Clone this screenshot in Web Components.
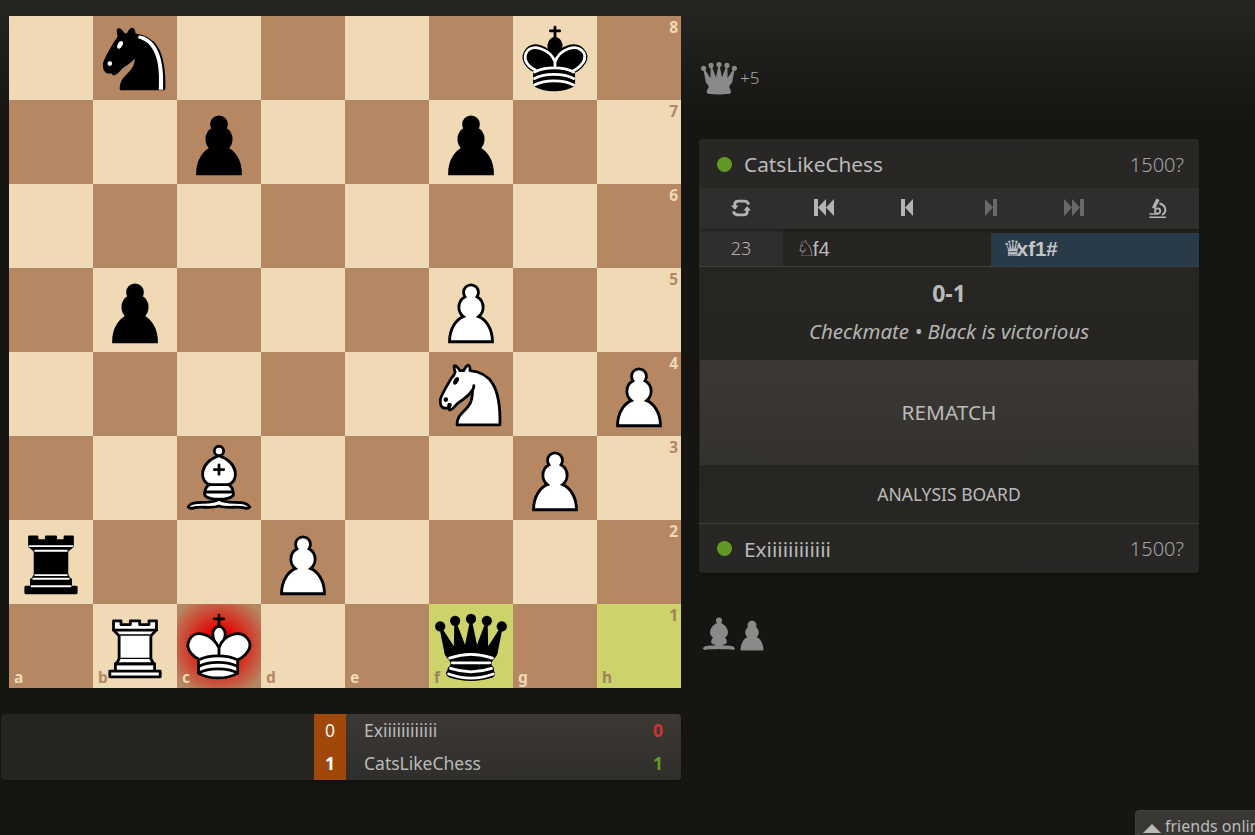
<!DOCTYPE html>
<html lang="en"><head><meta charset="utf-8"><title>Chess game</title>
<style>
html,body{margin:0;height:100%;overflow:hidden}
body{background:#161512 linear-gradient(to bottom,#272521,#161512 116px) no-repeat;color:#bababa;font-family:"Noto Sans",sans-serif}
</style></head><body>
<game-page>
  <chess-board slot="board"></chess-board>
  <cross-table slot="table"></cross-table>
  <mono-row slot="top" pieces="q" diff="+5"></mono-row>
  <game-panel slot="panel">
    <player-row name="CatsLikeChess" rating="1500?"></player-row>
    <control-bar></control-bar>
    <move-row num="23"></move-row>
    <game-result></game-result>
    <action-buttons></action-buttons>
    <player-row name="Exiiiiiiiiiiii" rating="1500?" bordered></player-row>
  </game-panel>
  <mono-row slot="bottom" pieces="b p"></mono-row>
</game-page>
<friends-box></friends-box>
<script>
const W='stroke="#000" stroke-width="1.5" stroke-linecap="round" stroke-linejoin="round" fill-rule="evenodd"';
const PAWN='M22.5 9c-2.21 0-4 1.79-4 4 0 .89.29 1.71.78 2.38C17.33 16.5 16 18.59 16 21c0 2.03.94 3.84 2.41 5.03-3 1.06-7.41 5.55-7.41 13.47h23c0-7.92-4.41-12.41-7.41-13.47 1.47-1.19 2.41-3 2.41-5.03 0-2.41-1.33-4.5-3.28-5.62.49-.67.78-1.49.78-2.38 0-2.21-1.79-4-4-4z';
const KN1='M22 10c10.5 1 16.5 8 16 29H15c0-9 10-6.5 8-21';
const KN2='M24 18c.38 2.91-5.55 7.37-8 9-3 2-2.82 4.34-5 4-1.042-.94 1.41-3.04 0-3-1 0 .19 1.23-1 2-1 0-4.003 1-4-4 0-2 6-12 6-12s1.89-1.9 2-3.5c-.73-.994-.5-2-.5-3 1-1 3 2.5 3 2.5h2s.78-1.992 2.5-3c1 0 1 3 1 3';
const KN3='M9.5 25.5a.5.5 0 1 1-1 0 .5.5 0 1 1 1 0zm5.433-9.75a.5 1.5 30 1 1-.866-.5.5 1.5 30 1 1 .866.5z';
const KING='M11.5 37c5.5 3.5 15.5 3.5 21 0v-7s9-4.5 6-10.5c-4-6.5-13.5-3.5-16 4V27v-3.5c-3.5-7.5-13-10.5-16-4-3 6 5 10 5 10V37z';
const KHEAD='M22.5 25s4.5-7.5 3-10.5c0 0-1-2.5-3-2.5s-3 2.5-3 2.5c-1.5 3 3 10.5 3 10.5';
const KBAND='M11.5 30c5.5-3 15.5-3 21 0m-21 3.5c5.5-3 15.5-3 21 0m-21 3.5c5.5-3 15.5-3 21 0';
const BISH1='M9 36c3.39-.97 10.11.43 13.5-2 3.39 2.43 10.11 1.03 13.5 2 0 0 1.65.54 3 2-.68.97-1.65.99-3 .5-3.39-.97-10.11.46-13.5-1-3.39 1.46-10.11.03-13.5 1-1.354.49-2.323.47-3-.5 1.354-1.94 3-2 3-2z';
const BISH2='M15 32c2.5 2.5 12.5 2.5 15 0 .5-1.5 0-2 0-2 0-2.5-2.5-4-2.5-4 5.5-1.5 6-11.5-5-15.5-11 4-10.5 14-5 15.5 0 0-2.5 1.5-2.5 4 0 0-.5.5 0 2z';
const BISH3='M25 8a2.5 2.5 0 1 1-5 0 2.5 2.5 0 1 1 5 0z';
const QCIR='<circle cx="6" cy="12" r="2.75"/><circle cx="14" cy="9" r="2.75"/><circle cx="22.5" cy="8" r="2.75"/><circle cx="31" cy="9" r="2.75"/><circle cx="39" cy="12" r="2.75"/>';
const Q1='M9 26c8.5-1.5 21-1.5 27 0l2.5-12.5L31 25l-.3-14.1-5.2 13.6-3-14.5-3 14.5-5.2-13.6L14 25 6.5 13.5 9 26z';
const Q2='M9 26c0 2 1.5 2 2.5 4 1 1.5 1 1 .5 3.5-1.5 1-1.5 2.5-1.5 2.5-1.5 1.5.5 2.5.5 2.5 6.5 1 16.5 1 23 0 0 0 1.5-1 0-2.5 0 0 .5-1.5-1-2.5-.5-2.5-.5-2 .5-3.5 1-2 2.5-2 2.5-4-8.5-1.5-18.5-1.5-27 0z';
const Q3='M11 29a35 35 1 0 1 23 0M12.5 31.5h20M11.5 34.5a35 35 1 0 0 22 0M10.5 37.5a35 35 1 0 0 24 0';
const PIECES={
P:`<path d="${PAWN}" fill="#fff" stroke="#000" stroke-width="1.5" stroke-linecap="round"/>`,
p:`<path d="${PAWN}" fill="#000" stroke="#000" stroke-width="1.5" stroke-linecap="round"/>`,
R:`<g fill="#fff" ${W}><path d="M9 39h27v-3H9v3zM12 36v-4h21v4H12zM11 14V9h4v2h5V9h5v2h5V9h4v5" stroke-linecap="butt"/><path d="M34 14l-3 3H14l-3-3"/><path d="M31 17v12.5H14V17" stroke-linecap="butt" stroke-linejoin="miter"/><path d="M31 29.5l1.5 2.5h-20l1.5-2.5"/><path d="M11 14h23" fill="none" stroke-linejoin="miter"/></g>`,
r:`<g ${W}><path d="M9 39h27v-3H9v3zM12.5 32l1.5-2.5h17l1.5 2.5h-20zM12 36v-4h21v4H12z" stroke-linecap="butt"/><path d="M14 29.5v-13h17v13H14z" stroke-linecap="butt" stroke-linejoin="miter"/><path d="M14 16.5L11 14h23l-3 2.5H14zM11 14V9h4v2h5V9h5v2h5V9h4v5H11z" stroke-linecap="butt"/><path d="M12 35.5h21M13 31.5h19M14 29.5h17M14 16.5h17M11 14h23" fill="none" stroke="#fff" stroke-width="1" stroke-linejoin="miter"/></g>`,
N:`<g fill="none" ${W}><path d="${KN1}" fill="#fff"/><path d="${KN2}" fill="#fff"/><path d="${KN3}" fill="#000"/></g>`,
n:`<g fill="none" ${W}><path d="${KN1}" fill="#000"/><path d="${KN2}" fill="#000"/><path d="${KN3}" fill="#fff" stroke="#fff"/><path d="M24.55 10.4l-.45 1.45.5.15c3.15 1 5.65 2.49 7.9 6.75S35.75 29.06 35.25 39l-.05.5h2.25l.05-.5c.5-10.06-.88-16.85-3.25-21.34-2.37-4.49-5.79-6.64-9.19-7.16l-.51-.1z" fill="#fff" stroke="none"/></g>`,
B:`<g fill="none" ${W}><g fill="#fff" stroke-linecap="butt"><path d="${BISH1}"/><path d="${BISH2}"/><path d="${BISH3}"/></g><path d="M17.5 26h10M15 30h15m-7.5-14.5v5M20 18h5" stroke-linejoin="miter"/></g>`,
K:`<g fill="none" ${W}><path d="M22.5 11.63V6M20 8h5" stroke-linejoin="miter"/><path d="${KHEAD}" fill="#fff" stroke-linecap="butt" stroke-linejoin="miter"/><path d="${KING}" fill="#fff"/><path d="${KBAND}"/></g>`,
k:`<g fill="none" ${W}><path d="M22.5 11.63V6" stroke-linejoin="miter"/><path d="${KHEAD}" fill="#000" stroke-linecap="butt" stroke-linejoin="miter"/><path d="${KING}" fill="#000"/><path d="M20 8h5" stroke-linejoin="miter"/><path d="M32 29.5s8.5-4 6.03-9.65C34.15 14 25 18 22.5 24.5l.01 2.1-.01-2.1C20 18 9.906 14 6.997 19.85c-2.497 5.65 4.853 9 4.853 9" stroke="#fff"/><path d="${KBAND}" stroke="#fff"/></g>`,
q:`<g ${W}><g stroke="none">${QCIR}</g><path d="${Q1}" stroke-linecap="butt"/><path d="${Q2}" stroke-linecap="butt"/><path d="M11 38.5a35 35 1 0 0 23 0" fill="none" stroke-linecap="butt"/><path d="${Q3}" fill="none" stroke="#fff"/></g>`
};
const MONO={
q:`<g fill="#8a8a8a" stroke="#8a8a8a" stroke-width="1.5" stroke-linejoin="round"><g stroke="none">${QCIR}</g><path d="${Q1}"/><path d="${Q2}"/></g>`,
b:`<g fill="#8a8a8a" stroke="#8a8a8a" stroke-width="1.5" stroke-linejoin="round"><path d="${BISH1}"/><path d="${BISH2}"/><path d="${BISH3}"/></g>`,
p:`<path d="${PAWN}" fill="#8a8a8a" stroke="#8a8a8a" stroke-width="1.5"/>`
};
function def(name,css,html){
  customElements.define(name,class extends HTMLElement{
    constructor(){super();this.attachShadow({mode:'open'})}
    connectedCallback(){
      const h=typeof html==='function'?html(this):html;
      this.shadowRoot.innerHTML=`<style>${css}</style>${h}`;
    }
  });
}
def('chess-piece',':host{display:block;width:100%;height:100%}svg{display:block;width:100%;height:100%}',
  e=>`<svg viewBox="0 0 45 45" aria-hidden="true">${PIECES[e.getAttribute('type')]}</svg>`);
def('board-square',`:host{display:block;position:relative;width:84px;height:84px;background:var(--bg)}
  :host([tone=light]){--bg:#f0d9b5;--co:#b58863}
  :host([tone=dark]){--bg:#b58863;--co:#f0d9b5}
  :host([last]){--bg:#cdd26a}
  :host([last][tone=light]){--co:#a3815f}
  .chk{position:absolute;inset:0;background:radial-gradient(ellipse at center,#f00 0%,#e70000 25%,rgba(169,0,0,0) 89%,rgba(158,0,0,0) 100%)}
  .co{position:absolute;font:700 15.5px/1 "Noto Sans",sans-serif;color:var(--co)}
  .f{left:5px;bottom:3px}.r{right:3px;top:4px}
  chess-piece{position:absolute;inset:0}`,
  e=>{
    const p=e.getAttribute('piece'),f=e.getAttribute('file'),r=e.getAttribute('rank');
    return `${e.hasAttribute('check')?'<div class="chk"></div>':''}${f?`<span class="co f">${f}</span>`:''}${r?`<span class="co r">${r}</span>`:''}${p?`<chess-piece type="${p}"></chess-piece>`:''}`;
  });
const POS={b8:'n',g8:'k',c7:'p',f7:'p',b5:'p',f5:'P',f4:'N',h4:'P',c3:'B',g3:'P',a2:'r',d2:'P',b1:'R',c1:'K',f1:'q'};
def('chess-board',':host{display:grid;grid-template-columns:repeat(8,84px);grid-auto-rows:84px;width:672px;height:672px}',
  ()=>{
    let s='';
    for(let r=8;r>=1;r--)for(let c=0;c<8;c++){
      const fl='abcdefgh'[c],id=fl+r,tone=(c+r)%2===0?'light':'dark';
      s+=`<board-square tone="${tone}"${POS[id]?` piece="${POS[id]}"`:''}${r===1?` file="${fl}"`:''}${c===7?` rank="${r}"`:''}${id==='f1'||id==='h1'?' last':''}${id==='c1'?' check':''}></board-square>`;
    }
    return s;
  });
def('mono-row',`:host{display:flex;align-items:center;height:42px;margin-left:-1px}
  svg{width:42px;height:42px;display:block;flex:none}svg+svg{margin-left:-9px}
  span{font-size:17px;font-weight:300;color:#a6a6a6;padding-bottom:2px}`,
  e=>e.getAttribute('pieces').split(' ').map(k=>`<svg viewBox="0 0 45 45" aria-hidden="true">${MONO[k]}</svg>`).join('')+(e.getAttribute('diff')?`<span>${e.getAttribute('diff')}</span>`:''));
def('player-row',`:host{display:flex;align-items:center;height:49px;padding:1px 15px 0 18px;box-sizing:border-box;font-size:20.8px;color:#bababa}
  :host([bordered]){border-top:1px solid #404040;height:50px;padding-top:0}
  i{width:15px;height:15px;border-radius:50%;background:#629924;margin-right:12px;flex:none}
  b{font-weight:400;flex:1;white-space:nowrap}
  span{font-weight:300;color:#a2a2a2;font-size:20px}`,
  e=>`<i></i><b>${e.getAttribute('name')}</b><span>${e.getAttribute('rating')}</span>`);
const ICON={
 sync:`<svg width="20" height="20" viewBox="0 0 20 20" fill="none" stroke="currentColor" stroke-width="2.8"><path d="M17.6 6.6Q16.8 3.2 13.2 3.2H7.2Q3.8 3.2 3.8 6.6V8"/><path d="M2.4 13.4Q3.2 16.8 6.8 16.8H12.8Q16.2 16.8 16.2 13.4V12"/><path d="M0 7.6H7.6L3.8 11.8Z M12.4 12.4H20L16.2 8.2Z" fill="currentColor" stroke="none"/></svg>`,
 first:`<svg width="20" height="17" viewBox="0 0 20 17" fill="currentColor"><path d="M0 0h4v17H0zM4 8.5 12 0v17zM12 8.5 20 0v17z"/></svg>`,
 prev:`<svg width="12" height="17" viewBox="0 0 12 17" fill="currentColor"><path d="M0 0h4v17H0zM4 8.5 12 0v17z"/></svg>`,
 next:`<svg width="12" height="17" viewBox="0 0 12 17" fill="currentColor"><path d="M12 0H8v17h4zM8 8.5 0 0v17z"/></svg>`,
 last:`<svg width="20" height="17" viewBox="0 0 20 17" fill="currentColor"><path d="M20 0h-4v17h4zM16 8.5 8 0v17zM8 8.5 0 0v17z"/></svg>`,
 lab:`<svg width="18" height="20" viewBox="0 0 18 20" fill="none" stroke="currentColor" style="margin-left:1px"><path d="M.5 19.2H17" stroke-width="1.6"/><path d="M.5 16H9" stroke-width="1.6"/><path d="M10.5 5.5C17.5 7 18 14.8 13 16.8" stroke-width="1.9"/><path d="M7.4.4 10.6 2 6 11 3 9.5Z" fill="currentColor" stroke="none"/><circle cx="8.6" cy="13" r="2.6" stroke-width="1.7"/></svg>`
};
def('control-bar',`:host{display:grid;grid-template-columns:repeat(6,1fr);height:41px;background:#302e2c;box-shadow:0 2px 3px rgba(0,0,0,.3);position:relative;z-index:1}
  span{display:flex;align-items:center;justify-content:center;color:#b4b4b4;padding-bottom:2px}
  span.off{color:#6a6967}svg{display:block}`,
  ()=>['sync','first','prev','next','last','lab'].map(k=>`<span class="${k==='next'||k==='last'?'off':''}">${ICON[k]}</span>`).join(''));
def('move-row',`:host{display:grid;grid-template-columns:84px 1fr 1fr;height:38px;border-bottom:1px solid #404040;box-sizing:border-box;background:#262421}
  .n{background:#302e2c;display:flex;align-items:center;justify-content:center;font-size:18px;font-weight:300;color:#b0b0b0}
  .m{display:flex;align-items:center;padding:0 0 2px 13px;height:33px;box-sizing:border-box;align-self:end;font:20.5px "Liberation Sans",sans-serif;color:#bababa}
  .a{background:#293a49;font-weight:700;color:#c4c4c4}
  .g{font-family:"DejaVu Sans",sans-serif;font-size:22px;line-height:1;letter-spacing:-3px}
  .a .g{letter-spacing:-6px;margin-left:-1px}`,
  e=>`<div class="n">${e.getAttribute('num')}</div><div class="m"><span class="g">♘</span>f4</div><div class="m a"><span class="g">♛</span>xf1#</div>`);
def('game-result',`:host{display:flex;flex-direction:column;align-items:center;height:93px;box-sizing:border-box;padding-top:11px;color:#bababa}
  b{font-size:23px;line-height:30px;font-weight:700}
  i{font-size:20.5px;line-height:28px;margin-top:9px;color:#b4b4b4}`,
  ()=>`<b>0-1</b><i>Checkmate • Black is victorious</i>`);
def('action-buttons',`:host{display:flex;flex-direction:column;height:163px;box-sizing:border-box;padding:0 1px}
  .r{height:105px;box-sizing:border-box;padding-bottom:2px;background:linear-gradient(#3c3934,#33312e);display:flex;align-items:center;justify-content:center;font-size:20.8px;color:#bababa}
  .a{flex:1;display:flex;align-items:center;justify-content:center;font-size:17.5px;color:#bababa}`,
  ()=>`<div class="r">REMATCH</div><div class="a">ANALYSIS BOARD</div>`);
def('game-panel',`:host{display:block;width:500px;height:434px;border-radius:4px;overflow:hidden;box-shadow:0 2px 2px rgba(0,0,0,.2);background:linear-gradient(#282725,#262421 60%,#292725)}`,`<slot></slot>`);
def('cross-table',`:host{display:flex;width:680px;height:66px;margin:26px 0 0 -8px;border-radius:4px;overflow:hidden;box-shadow:0 2px 2px rgba(0,0,0,.2);font-size:17.5px}
  .l{width:313px;background:#262421}
  .o{width:32px;background:#a0480a;display:grid;grid-template-rows:1fr 1fr;color:#f0f0f0;text-align:center;line-height:33px}
  .o b{color:#fff}
  .t{flex:1;background:linear-gradient(#3c3934,#302e2c);display:grid;grid-template-rows:1fr 1fr;padding:0 18px}
  .t div{display:flex;justify-content:space-between;align-items:center;color:#bababa;padding-bottom:2px}
  .los{color:#cc3333;font-weight:700}.win{color:#629924;font-weight:700}`,
  ()=>`<div class="l"></div><div class="o"><span>0</span><b>1</b></div><div class="t"><div><span>Exiiiiiiiiiiii</span><span class="los">0</span></div><div><span>CatsLikeChess</span><span class="win">1</span></div></div>`);
def('friends-box',`:host{position:fixed;left:1135px;top:810px;width:150px;height:40px;background:#3a3835;border:1px solid #404040;border-radius:4px 4px 0 0;box-sizing:border-box;padding:4px 0 0 7px;font-size:16px;color:#bababa;white-space:nowrap;display:flex;align-items:flex-start}
  svg{margin:9px 4px 0 0;display:block}`,
  `<svg width="18" height="9" viewBox="0 0 18 9" fill="#bababa" aria-hidden="true"><path d="M0 9 9 0l9 9z"/></svg><span>friends online</span>`);
def('game-page',`:host{display:grid;grid-template-columns:672px 500px;column-gap:18px;padding:16px 0 0 9px}
  .s{display:flex;flex-direction:column}
  .side{gap:40px;padding-top:41px}`,
  `<div class="s"><slot name="board"></slot><slot name="table"></slot></div><div class="s side"><slot name="top"></slot><slot name="panel"></slot><slot name="bottom"></slot></div>`);
</script>
</body></html>
